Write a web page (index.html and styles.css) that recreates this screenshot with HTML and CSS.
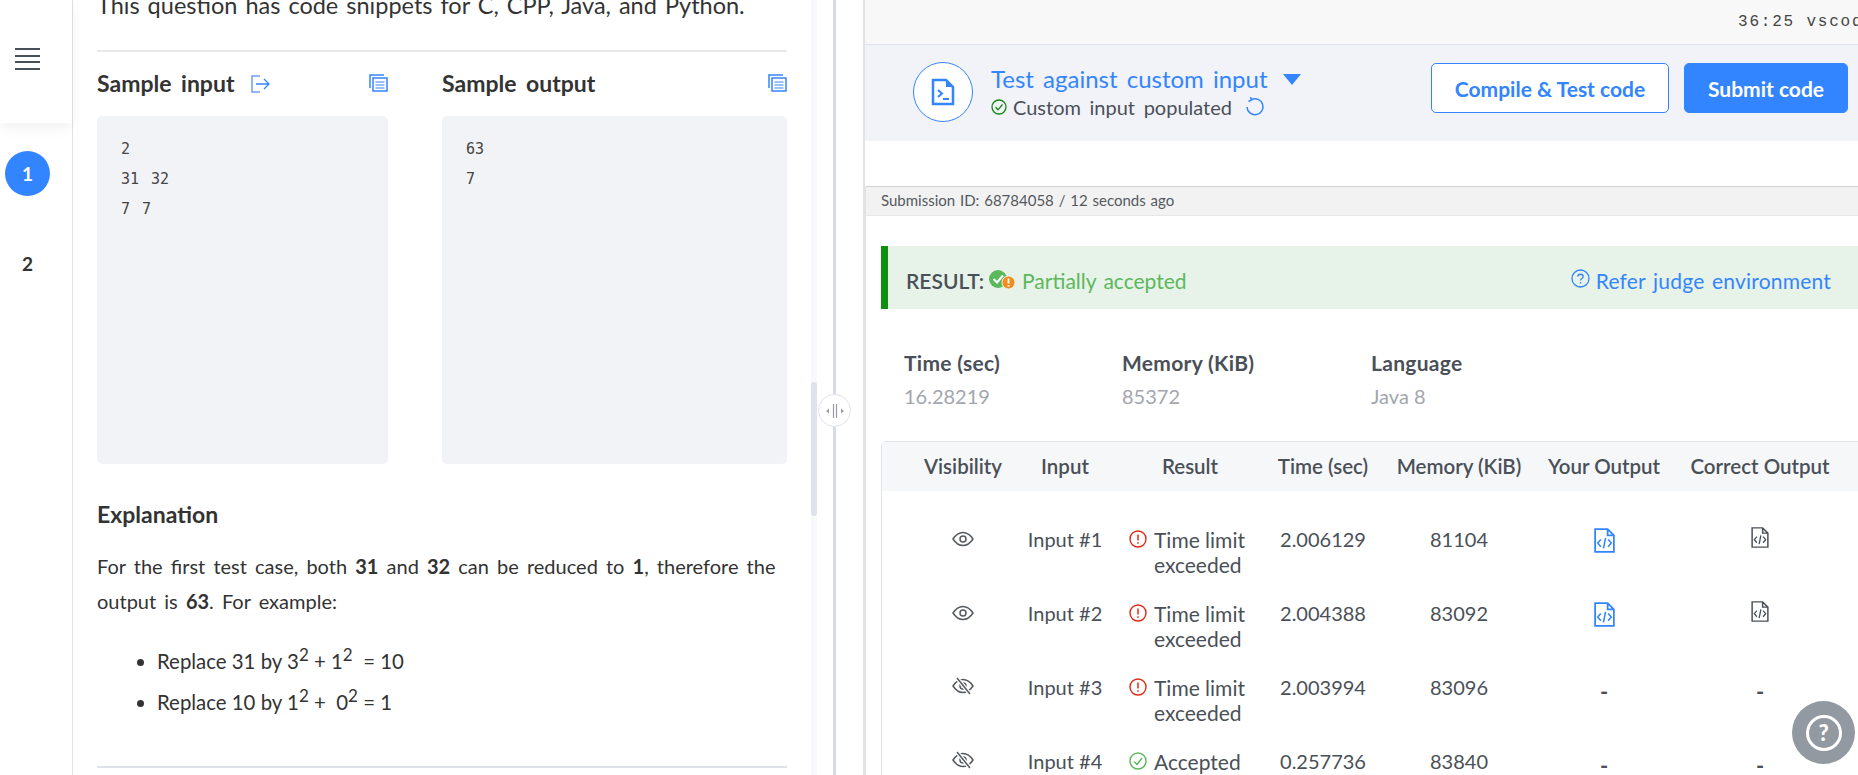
FILE: index.html
```html
<!DOCTYPE html>
<html lang="en">
<head>
    <meta charset="UTF-8">
    <title>Submission result</title>
    <link rel="stylesheet" href="styles.css">
</head>
<body>
    <svg class="defs" width="0" height="0">
        <symbol id="eye" viewBox="0 0 22 16">
            <path d="M1 8C4 3.500 7.300 1.500 11 1.500S18 3.500 21 8C18 12.500 14.700 14.500 11 14.500S4 12.500 1 8Z" fill="none" stroke="currentColor" stroke-width="1.500"/>
            <circle cx="11" cy="8" r="3" fill="none" stroke="currentColor" stroke-width="1.500"/>
        </symbol>
        <symbol id="eye-off" viewBox="0 0 22 18">
            <path d="M1 9C4 4.500 7.300 2.500 11 2.500S18 4.500 21 9C18 13.500 14.700 15.500 11 15.500S4 13.500 1 9Z" fill="none" stroke="currentColor" stroke-width="1.500"/>
            <circle cx="11" cy="9" r="3" fill="none" stroke="currentColor" stroke-width="1.500"/>
            <path d="M5 1L18 17" stroke="#fff" stroke-width="4"/>
            <path d="M5 1L18 17" stroke="currentColor" stroke-width="1.500"/>
        </symbol>
        <symbol id="alert" viewBox="0 0 18 18">
            <circle cx="9" cy="9" r="8" fill="none" stroke="#e02b14" stroke-width="1.400"/>
            <path d="M9 4.500V10.500M9 12.300V13.700" stroke="#e02b14" stroke-width="1.500"/>
        </symbol>
        <symbol id="ok" viewBox="0 0 18 18">
            <circle cx="9" cy="9" r="8" fill="none" stroke="#5cb85c" stroke-width="1.400"/>
            <path d="M5 9.500L8 12.500L13 6" fill="none" stroke="#5cb85c" stroke-width="1.400"/>
        </symbol>
        <symbol id="doc-code" viewBox="0 0 20 24">
            <path d="M1 1H13L19 7V23H1Z M13 1V7H19" fill="none" stroke="currentColor" stroke-width="1.700"/>
            <path d="M6.500 11L3.500 14.500L6.500 18M13.500 11L16.500 14.500L13.500 18M11 9.500L9 19.500" fill="none" stroke="currentColor" stroke-width="1.500"/>
        </symbol>
        <symbol id="copy" viewBox="0 0 19 18">
            <path d="M1 14V1H15" fill="none" stroke="currentColor" stroke-width="1.500"/>
            <path d="M4 4H18V17H4Z" fill="none" stroke="currentColor" stroke-width="1.500"/>
            <path d="M6.500 8H15.500M6.500 11H15.500M6.500 14H15.500" stroke="currentColor" stroke-width="1.200"/>
        </symbol>
    </svg>

    <div class="page">
        <nav class="rail">
            <div class="rail-top">
                <div class="burger"><span></span><span></span><span></span><span></span></div>
            </div>
            <div class="rail-num active">1</div>
            <div class="rail-num">2</div>
        </nav>

        <section class="problem">
            <p class="intro">This question has code snippets for C, CPP, Java, and Python.</p>
            <hr class="rule">
            <div class="samples">
                <div class="sample sample-in">
                    <div class="sample-head">
                        <h3>Sample input</h3>
                        <svg class="open-icon" width="20" height="18" viewBox="0 0 20 18">
                            <path d="M9 1H1V17H9" fill="none" stroke="#6f9cff" stroke-width="1.500"/>
                            <path d="M5 9H18M13 4L18 9L13 14" fill="none" stroke="#3385ff" stroke-width="1.300"/>
                        </svg>
                        <svg class="copy-icon" width="19" height="18"><use href="#copy"/></svg>
                    </div>
                    <pre class="sample-box">2
31 32
7 7</pre>
                </div>
                <div class="sample sample-out">
                    <div class="sample-head">
                        <h3>Sample output</h3>
                        <svg class="copy-icon" width="19" height="18"><use href="#copy"/></svg>
                    </div>
                    <pre class="sample-box">63
7</pre>
                </div>
            </div>
            <h3 class="explain-title">Explanation</h3>
            <p class="explain">For the first test case, both <b>31</b> and <b>32</b> can be reduced to <b>1</b>, therefore the output is <b>63</b>. For example:</p>
            <ul class="steps">
                <li>Replace 31 by 3<sup>2</sup> + 1<sup>2</sup> &nbsp;= 10</li>
                <li>Replace 10 by 1<sup>2</sup> + &nbsp;0<sup>2</sup> = 1</li>
            </ul>
            <hr class="rule rule-end">
        </section>

        <div class="scrollbar"><div class="thumb"></div></div>

        <div class="divider">
            <div class="handle">
                <svg width="22" height="16" viewBox="0 0 22 16">
                    <path d="M9.500 1V15M12.500 1V15" stroke="#9a9da3" stroke-width="1.200"/>
                    <path d="M2 8L5 5.500V10.500ZM20 8L17 5.500V10.500Z" fill="#9a9da3"/>
                </svg>
            </div>
        </div>

        <main class="editor">
            <div class="status-bar"><span class="status-text">36:25 vscode</span></div>
            <div class="toolbar">
                <div class="term-circle">
                    <svg width="24" height="28" viewBox="0 0 24 28">
                        <path d="M2 2H15L22 9V26H2Z" fill="none" stroke="#3385ff" stroke-width="2.500"/>
                        <path d="M15 2V9H22" fill="#3385ff"/>
                        <path d="M7 12L11 15.500L7 19" fill="none" stroke="#3385ff" stroke-width="2"/>
                        <path d="M12 21H18" stroke="#3385ff" stroke-width="2"/>
                    </svg>
                </div>
                <div class="custom">
                    <div class="custom-title">Test against custom input <span class="caret"></span></div>
                    <div class="custom-sub">
                        <svg class="custom-ok" width="16" height="16" viewBox="0 0 16 16">
                            <circle cx="8" cy="8" r="7" fill="none" stroke="#128a12" stroke-width="1.300"/>
                            <path d="M4.500 8.300L7 10.800L11.500 5.500" fill="none" stroke="#128a12" stroke-width="1.300"/>
                        </svg>
                        Custom input populated
                        <svg class="reset" width="20" height="20" viewBox="0 0 20 20">
                            <path d="M6.500 2.500A8 8 0 1 1 2 10" fill="none" stroke="#3385ff" stroke-width="1.500"/>
                            <path d="M5.500 0L6.500 2.800L3.500 4.500" fill="none" stroke="#3385ff" stroke-width="1.500"/>
                        </svg>
                    </div>
                </div>
                <button class="btn btn-outline">Compile &amp; Test code</button>
                <button class="btn btn-solid">Submit code</button>
            </div>

            <div class="submission">
                <div class="submission-head">Submission ID: 68784058 / 12 seconds ago</div>
                <div class="result-bar">
                    <span class="result-label">RESULT:</span>
                    <svg class="result-icon" width="26" height="20" viewBox="0 0 26 20">
                        <circle cx="9" cy="9" r="9" fill="#5cb85c"/>
                        <path d="M4.500 9L8 12.500L14 5.500" fill="none" stroke="#fff" stroke-width="2.200"/>
                        <circle cx="19.500" cy="12.500" r="6.500" fill="#f58a1f" stroke="#e7f2e8" stroke-width="1"/>
                        <path d="M19.500 8.500V13.500M19.500 15V16.500" stroke="#fff" stroke-width="1.800"/>
                    </svg>
                    <span class="result-text">Partially accepted</span>
                    <a class="judge">
                        <svg width="19" height="19" viewBox="0 0 19 19">
                            <circle cx="9.500" cy="9.500" r="8.500" fill="none" stroke="#3385ff" stroke-width="1.300"/>
                            <path d="M6.800 7.500C6.800 4.500 12.200 4.500 12.200 7.500C12.200 9.500 9.500 9.500 9.500 11.500M9.500 13V14.500" fill="none" stroke="#3385ff" stroke-width="1.300"/>
                        </svg>
                        Refer judge environment
                    </a>
                </div>

                <div class="stats">
                    <div class="stat stat-time"><div class="stat-label">Time (sec)</div><div class="stat-value">16.28219</div></div>
                    <div class="stat stat-mem"><div class="stat-label">Memory (KiB)</div><div class="stat-value">85372</div></div>
                    <div class="stat"><div class="stat-label">Language</div><div class="stat-value">Java 8</div></div>
                </div>

                <div class="cases">
                    <div class="row row-head">
                        <div>Visibility</div><div>Input</div><div>Result</div><div>Time (sec)</div><div>Memory (KiB)</div><div>Your Output</div><div>Correct Output</div>
                    </div>
                    <div class="row">
                        <div><svg class="vis" width="22" height="16"><use href="#eye"/></svg></div>
                        <div>Input #1</div>
                        <div class="verdict"><svg width="18" height="18"><use href="#alert"/></svg><span>Time limit exceeded</span></div>
                        <div>2.006129</div><div>81104</div>
                        <div><svg class="doc doc-blue" width="21" height="25"><use href="#doc-code"/></svg></div>
                        <div><svg class="doc" width="18" height="21"><use href="#doc-code"/></svg></div>
                    </div>
                    <div class="row">
                        <div><svg class="vis" width="22" height="16"><use href="#eye"/></svg></div>
                        <div>Input #2</div>
                        <div class="verdict"><svg width="18" height="18"><use href="#alert"/></svg><span>Time limit exceeded</span></div>
                        <div>2.004388</div><div>83092</div>
                        <div><svg class="doc doc-blue" width="21" height="25"><use href="#doc-code"/></svg></div>
                        <div><svg class="doc" width="18" height="21"><use href="#doc-code"/></svg></div>
                    </div>
                    <div class="row">
                        <div><svg class="vis" width="22" height="18"><use href="#eye-off"/></svg></div>
                        <div>Input #3</div>
                        <div class="verdict"><svg width="18" height="18"><use href="#alert"/></svg><span>Time limit exceeded</span></div>
                        <div>2.003994</div><div>83096</div>
                        <div class="dash">-</div><div class="dash">-</div>
                    </div>
                    <div class="row">
                        <div><svg class="vis" width="22" height="18"><use href="#eye-off"/></svg></div>
                        <div>Input #4</div>
                        <div class="verdict"><svg width="18" height="18"><use href="#ok"/></svg><span>Accepted</span></div>
                        <div>0.257736</div><div>83840</div>
                        <div class="dash">-</div><div class="dash">-</div>
                    </div>
                </div>
            </div>
        </main>
    </div>

    <div class="help"><span>?</span></div>
</body>
</html>
```

FILE: styles.css
```css
* {
    box-sizing: border-box;
}
html, body {
    margin: 0;
    height: 100%;
    overflow: hidden;
    background: #fff;
    font-family: Lato, "Open Sans", sans-serif;
    color: #333;
}
.defs {
    position: absolute;
}
.page {
    display: flex;
    height: 775px;
    overflow: hidden;
}

/* left rail */
.rail {
    width: 73px;
    flex: none;
    border-right: 1px solid #dfe2ea;
}
.rail-top {
    height: 123px;
    padding: 48px 15px 0;
    box-shadow: 0 6px 12px rgba(0, 0, 0, 0.05);
}
.burger span {
    display: block;
    height: 2px;
    width: 25px;
    background: #4a5058;
    margin-bottom: 4.500px;
}
.rail-num {
    width: 45px;
    height: 45px;
    margin: 28px 0 0 5px;
    border-radius: 50%;
    display: flex;
    align-items: center;
    justify-content: center;
    font-size: 19px;
    font-weight: 700;
}
.rail-num + .rail-num {
    margin-top: 45px;
}
.rail-num.active {
    background: #3385ff;
    color: #fff;
}

/* problem panel */
.problem {
    width: 738px;
    flex: none;
    padding: 0 24px;
    overflow: hidden;
}
.intro {
    margin: -12px 0 27px;
    font-size: 23.500px;
    line-height: 35px;
    word-spacing: 2px;
    white-space: nowrap;
}
.rule {
    border: 0;
    height: 2px;
    margin: 0;
    background: #e8e8e8;
}
.samples {
    display: flex;
    gap: 54px;
}
.sample-in {
    width: 291px;
}
.sample-out {
    width: 345px;
}
.sample {
    flex: none;
}
.sample-head {
    height: 64px;
    display: flex;
    align-items: center;
    gap: 17px;
    padding-bottom: 2px;
}
h3 {
    margin: 0;
    font-size: 23px;
    font-weight: 700;
    color: #333;
}
.sample-head h3 {
    word-spacing: 4px;
}
.open-icon {
    margin-top: 1px;
}
.copy-icon {
    margin-left: auto;
    color: #3385ff;
}
.sample-box {
    margin: 0;
    height: 348px;
    padding: 18px 24px;
    border-radius: 5px;
    background: #f2f3f7;
    font-family: "DejaVu Sans Mono", monospace;
    font-size: 15px;
    line-height: 30px;
    color: #444;
    word-spacing: 3px;
}
.explain-title {
    margin-top: 34px;
    line-height: 32px;
}
.explain {
    margin: 19px 0 0;
    font-size: 20px;
    line-height: 35px;
    word-spacing: 3px;
}
.steps {
    margin: 22px 0 0;
    padding-left: 60px;
    font-size: 20.400px;
    line-height: 41px;
}
.steps sup {
    line-height: 0;
    font-size: 17px;
    vertical-align: 8px;
}
.rule-end {
    margin-top: 43px;
    background: #dfe2ea;
}

/* scrollbar and splitter */
.scrollbar {
    width: 6px;
    flex: none;
    background: #f8f9fb;
    padding-top: 382px;
}
.thumb {
    height: 134px;
    border-radius: 3px;
    background: #dfe2ea;
}
.divider {
    width: 46px;
    flex: none;
    position: relative;
    background: linear-gradient(#d8dbe6, #d8dbe6) 16px 0 / 3px 100% no-repeat;
}
.handle {
    position: absolute;
    left: 1px;
    top: 394px;
    width: 33px;
    height: 33px;
    border: 1px solid #dfe2ea;
    border-radius: 50%;
    background: #fff;
    display: flex;
    align-items: center;
    justify-content: center;
}

/* right side */
.editor {
    flex: 1;
    min-width: 0;
    border-left: 2px solid #e2e2e6;
}
.status-bar {
    height: 45px;
    background: #f8f8f8;
    border-bottom: 1px solid #dfe2f0;
    padding: 10px 0 0 873px;
    white-space: nowrap;
    overflow: hidden;
}
.status-text {
    font-family: "Liberation Mono", monospace;
    font-size: 16px;
    letter-spacing: 1.800px;
    color: #444;
}
.toolbar {
    height: 96px;
    background: #f2f3f8;
    display: flex;
    align-items: center;
    padding: 0 10px 2px 48px;
}
.term-circle {
    width: 60px;
    height: 60px;
    border: 1px solid #3385ff;
    border-radius: 50%;
    background: #fff;
    display: flex;
    align-items: center;
    justify-content: center;
    flex: none;
}
.custom {
    margin-left: 18px;
    flex: 1;
}
.custom-title {
    font-size: 24px;
    line-height: 26px;
    color: #3385ff;
    word-spacing: 3px;
    display: flex;
    align-items: center;
    gap: 15px;
}
.caret {
    width: 0;
    height: 0;
    margin-top: 2px;
    border-left: 9px solid transparent;
    border-right: 9px solid transparent;
    border-top: 11px solid #3385ff;
}
.custom-sub {
    font-size: 20px;
    line-height: 24px;
    color: #4a5058;
    display: flex;
    align-items: center;
    gap: 6px;
    word-spacing: 3.500px;
    margin-top: 3px;
}
.reset {
    margin-left: 7px;
}
.btn {
    align-self: flex-start;
    margin-top: 18px;
    height: 50px;
    border-radius: 5px;
    font-family: inherit;
    font-size: 21px;
    font-weight: 700;
    border: 1px solid #3385ff;
    flex: none;
}
.btn-outline {
    width: 238px;
    background: #fff;
    color: #3385ff;
}
.btn-solid {
    width: 164px;
    margin-left: 15px;
    background: #3385ff;
    color: #fff;
}

/* submission card */
.submission {
    margin-top: 45px;
    border-left: 1px solid #e2e2e6;
}
.submission-head {
    height: 30px;
    background: #f2f2f2;
    border-top: 1px solid #d4d4d4;
    border-bottom: 1px solid #e6e6e6;
    padding-left: 15px;
    font-size: 15px;
    line-height: 27px;
    color: #55595f;
    word-spacing: 1px;
}
.result-bar {
    height: 63px;
    margin: 30px 0 0 15px;
    background: #e7f2e8;
    border-left: 7px solid #0e8f0e;
    display: flex;
    align-items: center;
    padding: 5px 27px 0 18px;
    font-size: 21px;
}
.result-label {
    font-weight: 600;
    color: #4a5058;
}
.result-icon {
    margin: -1px 7px 0 5px;
}
.result-text {
    color: #5cb85c;
    word-spacing: 2px;
}
.judge {
    margin-left: auto;
    display: flex;
    align-items: center;
    gap: 6px;
    color: #3385ff;
    word-spacing: 2px;
    letter-spacing: 0.200px;
}
.judge svg {
    margin-top: -3px;
}
.stats {
    display: flex;
    padding: 43px 0 0 38px;
}
.stat {
    font-size: 20px;
}
.stat-time {
    width: 218px;
}
.stat-mem {
    width: 249px;
}
.stat-label {
    font-size: 21px;
    letter-spacing: 0.300px;
    font-weight: 700;
    color: #4a5058;
    line-height: 22px;
}
.stat-value {
    color: #a3a6ad;
    line-height: 22px;
    margin-top: 11px;
}

/* test cases table */
.cases {
    margin: 34px 0 0 15px;
    border: 1px solid #dfe2ea;
    border-right: 0;
    border-bottom: 0;
    border-radius: 5px 0 0 0;
    font-size: 20px;
    color: #4a5058;
}
.row {
    display: grid;
    grid-template-columns: 92px 112px 138px 128px 144px 146px 166px;
    padding-left: 35px;
    text-align: center;
    height: 74px;
    line-height: 25px;
}
.row-head {
    height: 49px;
    line-height: 48px;
    background: #f6f7f9;
    font-size: 20.500px;
    font-weight: 600;
    margin-bottom: 36px;
}
.vis {
    margin-top: 1px;
    color: #555a60;
}
.doc {
    color: #4a5058;
}
.doc-blue {
    color: #3385ff;
    margin-top: 1px;
}
.verdict {
    display: flex;
    gap: 7px;
    text-align: left;
    padding-left: 8px;
    font-size: 21px;
}
.verdict svg {
    flex: none;
    margin-top: 3px;
}
.verdict span {
    width: 100px;
}
.dash {
    padding-top: 4px;
    font-weight: 700;
    font-size: 22px;
}

/* help button */
.help {
    position: absolute;
    left: 1792px;
    top: 701px;
    width: 63px;
    height: 63px;
    border-radius: 50%;
    background: #9299a1;
    display: flex;
    align-items: center;
    justify-content: center;
}
.help span {
    width: 36px;
    height: 36px;
    border: 3px solid #fff;
    border-radius: 50%;
    color: #fff;
    font-size: 22px;
    font-weight: 900;
    line-height: 30px;
    text-align: center;
}
```
